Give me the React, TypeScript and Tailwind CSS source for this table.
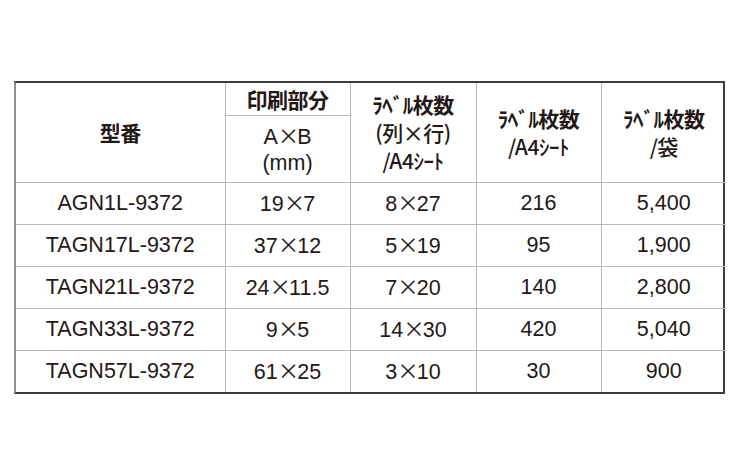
import React from 'react'

const ROWS = [
  { model: 'AGN1L-9372', size: ['19', '7'], grid: ['8', '27'], sheet: '216', bag: '5,400' },
  { model: 'TAGN17L-9372', size: ['37', '12'], grid: ['5', '19'], sheet: '95', bag: '1,900' },
  { model: 'TAGN21L-9372', size: ['24', '11.5'], grid: ['7', '20'], sheet: '140', bag: '2,800' },
  { model: 'TAGN33L-9372', size: ['9', '5'], grid: ['14', '30'], sheet: '420', bag: '5,040' },
  { model: 'TAGN57L-9372', size: ['61', '25'], grid: ['3', '10'], sheet: '30', bag: '900' },
]

const JP = "font-['Noto_Sans_CJK_JP',sans-serif] font-bold text-[21px] tracking-[-0.5px]"
const LATIN = "font-['Liberation_Sans','Noto_Sans_CJK_JP',sans-serif] text-[21.5px]"
const CELL = 'border border-[#b8b8b8] text-center align-middle p-0'

// big multiplication sign, as in the print original
function Times() {
  return <span className="font-['Noto_Sans_CJK_JP',sans-serif] font-normal tracking-[-2px]">×</span>
}

function Pair({ v }: { v: string[] }) {
  return (
    <>
      {v[0]}
      <Times />
      {v[1]}
    </>
  )
}

export default function App() {
  return (
    <div className="w-[750px] h-[450px] bg-white pt-[81px] pl-[14px] text-[#231815]">
      <div className="w-[711px] border-2 border-[#3c3c3c] border-l-[#8e8e8e]">
        <table className="w-full table-fixed border-collapse border-hidden">
          <colgroup>
            <col className="w-[209px]" />
            <col className="w-[125px]" />
            <col className="w-[126px]" />
            <col className="w-[125px]" />
            <col className="w-[125px]" />
          </colgroup>
          <thead>
            <tr className="h-[32px]">
              <th rowSpan={2} className={`${CELL} ${JP}`}>型番</th>
              <th className={`${CELL} ${JP} leading-[28px]`}>印刷部分</th>
              <th rowSpan={2} className={`${CELL} ${JP} leading-[28px]`}>
                <div>ﾗﾍﾞﾙ枚数</div>
                <div className="font-medium">(列×行)</div>
                <div className="font-medium">/A4ｼｰﾄ</div>
              </th>
              <th rowSpan={2} className={`${CELL} ${JP} leading-[28px]`}>
                <div>ﾗﾍﾞﾙ枚数</div>
                <div className="font-medium">/A4ｼｰﾄ</div>
              </th>
              <th rowSpan={2} className={`${CELL} ${JP} leading-[28px]`}>
                <div>ﾗﾍﾞﾙ枚数</div>
                <div className="font-medium">/袋</div>
              </th>
            </tr>
            <tr className="h-[67px]">
              <th className={`${CELL} ${LATIN} font-normal leading-[26px]`}>
                <div>A<Times />B</div>
                <div>(mm)</div>
              </th>
            </tr>
          </thead>
          <tbody className={LATIN}>
            {ROWS.map(r => (
              <tr key={r.model} className="h-[42px]">
                <td className={CELL}>{r.model}</td>
                <td className={CELL}><Pair v={r.size} /></td>
                <td className={CELL}><Pair v={r.grid} /></td>
                <td className={CELL}>{r.sheet}</td>
                <td className={CELL}>{r.bag}</td>
              </tr>
            ))}
          </tbody>
        </table>
      </div>
    </div>
  )
}
